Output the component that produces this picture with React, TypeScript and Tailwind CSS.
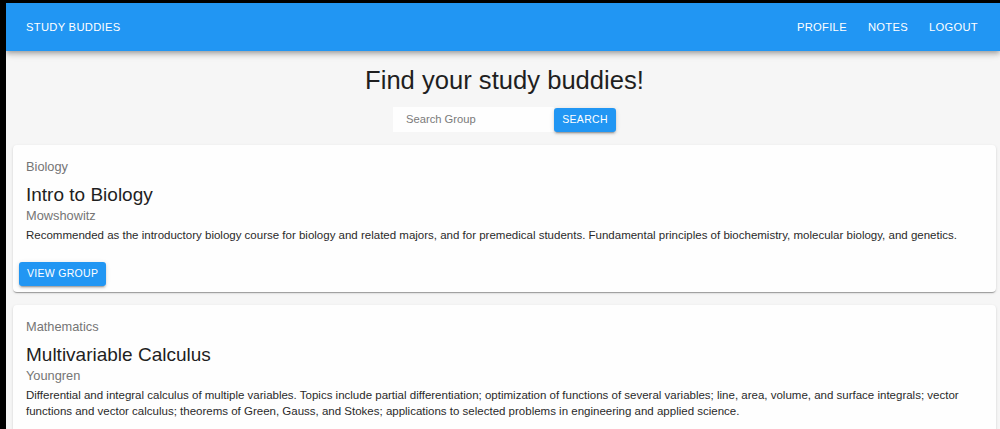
import React from "react";

const font = { fontFamily: '"Liberation Sans", Arial, sans-serif' };

function Card({ subject, title, prof, desc, button }: { subject: string; title: string; prof: string; desc: string; button?: boolean }) {
  return (
    <div className="bg-[#fefefe] rounded-[4px] shadow-[0_2px_1px_-1px_rgba(0,0,0,0.2),0_1px_1px_0_rgba(0,0,0,0.14),0_1px_3px_0_rgba(0,0,0,0.12)]">
      <div className="px-[13px] pt-[13px] pb-[17px]">
        <div className="text-[12.8px] leading-[18px] text-[#757575] mb-[6px]">{subject}</div>
        <div className="text-[19px] leading-[25px] text-[#1f1f1f]">{title}</div>
        <div className="text-[12.8px] leading-[18px] text-[#757575] mb-[2px]">{prof}</div>
        <div className="text-[11.5px] leading-[16px] text-[#2a2a2a]">{desc}</div>
      </div>
      {button && (
        <div className="px-[6px] pb-[6px]">
          <button className="h-[24px] px-[8px] rounded-[3px] bg-[#2196f3] text-white text-[10.5px] tracking-[0.3px] uppercase shadow-[0_3px_1px_-2px_rgba(0,0,0,0.2),0_2px_2px_0_rgba(0,0,0,0.14),0_1px_5px_0_rgba(0,0,0,0.12)]">
            View Group
          </button>
        </div>
      )}
    </div>
  );
}

export default function App() {
  return (
    <div style={font} className="w-[1000px] h-[429px] overflow-hidden bg-black flex flex-col pl-[6px] pt-[3px]">
      <div className="flex-1 bg-[#f6f6f6] flex flex-col overflow-hidden">
        <header className="h-[48px] shrink-0 bg-[#2196f3] flex items-center justify-between pl-[20px] pr-[22px] text-white text-[11.2px] tracking-[0.3px] shadow-[0_2px_4px_-1px_rgba(0,0,0,0.2),0_4px_5px_0_rgba(0,0,0,0.14),0_1px_10px_0_rgba(0,0,0,0.12)] relative z-10">
          <div>STUDY BUDDIES</div>
          <nav className="flex gap-[21px]">
            <span>PROFILE</span>
            <span>NOTES</span>
            <span>LOGOUT</span>
          </nav>
        </header>
        <div className="pl-[7px] pr-[4px] flex flex-col">
          <h1 className="mt-[14px] text-center text-[25.6px] leading-[30px] text-[#1f1f1f]">Find your study buddies!</h1>
          <div className="mt-[12px] flex justify-center items-end">
            <div className="w-[161px] h-[25px] bg-[#fefefe] flex items-center pl-[13px] text-[11.2px] text-[#7a7a7a]">Search Group</div>
            <button className="w-[62px] h-[24px] rounded-[3px] bg-[#2196f3] text-white text-[10.5px] tracking-[0.3px] shadow-[0_3px_1px_-2px_rgba(0,0,0,0.2),0_2px_2px_0_rgba(0,0,0,0.14),0_1px_5px_0_rgba(0,0,0,0.12)]">
              SEARCH
            </button>
          </div>
          <div className="mt-[13px] flex flex-col gap-[13px]">
            <Card
              subject="Biology"
              title="Intro to Biology"
              prof="Mowshowitz"
              desc="Recommended as the introductory biology course for biology and related majors, and for premedical students. Fundamental principles of biochemistry, molecular biology, and genetics."
              button
            />
            <Card
              subject="Mathematics"
              title="Multivariable Calculus"
              prof="Youngren"
              desc="Differential and integral calculus of multiple variables. Topics include partial differentiation; optimization of functions of several variables; line, area, volume, and surface integrals; vector functions and vector calculus; theorems of Green, Gauss, and Stokes; applications to selected problems in engineering and applied science."
            />
          </div>
        </div>
      </div>
    </div>
  );
}
